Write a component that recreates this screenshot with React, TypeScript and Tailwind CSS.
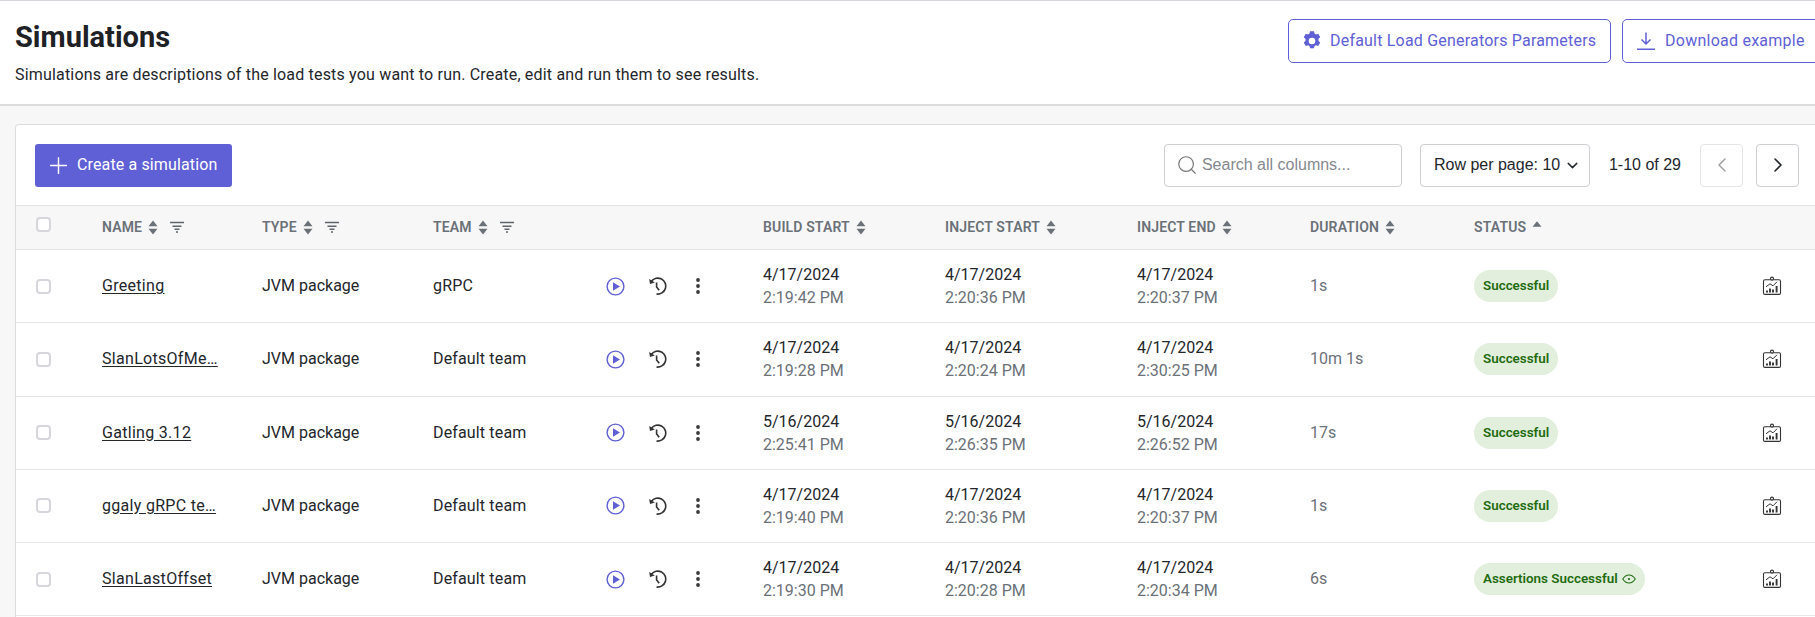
import { Plus, Search, ChevronDown, ChevronLeft, ChevronRight } from "lucide-react";

type Row = {
  name: string;
  team: string;
  build: [string, string];
  start: [string, string];
  end: [string, string];
  duration: string;
  status: string;
  assertions?: boolean;
};

const rows: Row[] = [
  { name: "Greeting", team: "gRPC", build: ["4/17/2024", "2:19:42 PM"], start: ["4/17/2024", "2:20:36 PM"], end: ["4/17/2024", "2:20:37 PM"], duration: "1s", status: "Successful" },
  { name: "SlanLotsOfMe…", team: "Default team", build: ["4/17/2024", "2:19:28 PM"], start: ["4/17/2024", "2:20:24 PM"], end: ["4/17/2024", "2:30:25 PM"], duration: "10m 1s", status: "Successful" },
  { name: "Gatling 3.12", team: "Default team", build: ["5/16/2024", "2:25:41 PM"], start: ["5/16/2024", "2:26:35 PM"], end: ["5/16/2024", "2:26:52 PM"], duration: "17s", status: "Successful" },
  { name: "ggaly gRPC te…", team: "Default team", build: ["4/17/2024", "2:19:40 PM"], start: ["4/17/2024", "2:20:36 PM"], end: ["4/17/2024", "2:20:37 PM"], duration: "1s", status: "Successful" },
  { name: "SlanLastOffset", team: "Default team", build: ["4/17/2024", "2:19:30 PM"], start: ["4/17/2024", "2:20:28 PM"], end: ["4/17/2024", "2:20:34 PM"], duration: "6s", status: "Assertions Successful", assertions: true },
];

function SortIcon() {
  return (
    <svg width="10" height="15" viewBox="0 0 10 15" className="fill-[#6b7178]">
      <path d="M5 .5 9.5 6.3H.5Z" />
      <path d="M5 14.5 .5 8.7H9.5Z" />
    </svg>
  );
}

function FilterIcon() {
  return (
    <svg width="14" height="12" viewBox="0 0 14 12" className="stroke-[#5f656c]" strokeWidth="1.4" fill="none">
      <path d="M0 1.5H14M2.5 5.2H11.5M4.5 8.2H9.5M6 11H8" />
    </svg>
  );
}

function GearIcon() {
  return (
    <svg width="22" height="22" viewBox="0 0 20 20" className="fill-[#6060d6]">
      <path
        fillRule="evenodd"
        d="M8.2 1.2h3.6l.5 2.1 1.3.75 2.1-.65 1.8 3.1-1.6 1.5v1.9l1.6 1.5-1.8 3.1-2.1-.65-1.3.75-.5 2.1H8.2l-.5-2.1-1.3-.75-2.1.65-1.8-3.1 1.6-1.5V8.1L2.5 6.6l1.8-3.1 2.1.65 1.3-.75ZM10 7a3 3 0 1 0 0 6 3 3 0 0 0 0-6Z"
      />
    </svg>
  );
}

function DownloadIcon() {
  return (
    <svg width="20" height="20" viewBox="0 0 20 20" fill="none" className="stroke-[#6060d6]" strokeWidth="1.5">
      <path d="M10 1.5V13M5.5 8.5 10 13l4.5-4.5M1 18.2h18" />
    </svg>
  );
}

function PlayIcon() {
  return (
    <svg width="19" height="19" viewBox="0 0 19 19" fill="none">
      <circle cx="9.5" cy="9.5" r="8.4" stroke="#6060d6" strokeWidth="1.4" />
      <path d="M7 5.2 14 9.5 7 13.8Z" fill="#6060d6" />
    </svg>
  );
}

function HistoryIcon() {
  return (
    <svg width="20" height="20" viewBox="0 0 20 20" fill="none" stroke="#333" strokeWidth="1.6">
      <path d="M4.4 5.2A8 8 0 1 1 9.5 18" />
      <path d="M2.2 3 3 8l4.8-1.4" fill="#333" stroke="none" />
      <path d="M9.6 6.5v4.4l2.6 3.4" />
    </svg>
  );
}

function DotsIcon() {
  return (
    <svg width="6" height="18" viewBox="0 0 6 18" className="fill-[#3a3a3a]">
      <circle cx="3" cy="3" r="1.9" />
      <circle cx="3" cy="9" r="1.9" />
      <circle cx="3" cy="15" r="1.9" />
    </svg>
  );
}

function ReportIcon() {
  return (
    <svg width="20" height="20" viewBox="0 0 20 20" fill="none" stroke="#333" strokeWidth="1.1">
      <rect x="1.5" y="3.8" width="17" height="14.6" rx="1.4" />
      <circle cx="10" cy="2.6" r="1.5" fill="#fff" />
      <path d="M4 10.8 8 7.8l3 2 4-4" strokeWidth="1" />
      <path d="M5 16.6v-2M8 16.6v-4.2M11 16.6v-3M14.6 16.6V10" strokeWidth="1.9" />
    </svg>
  );
}

function EyeIcon() {
  return (
    <svg width="14" height="10" viewBox="0 0 14 10" fill="none" stroke="#1f6b0f" strokeWidth="1.1" className="ml-1">
      <path d="M.8 5C2.4 2.4 4.5 1 7 1s4.6 1.4 6.2 4C11.6 7.6 9.5 9 7 9S2.4 7.6.8 5Z" />
      <circle cx="7" cy="5" r="1.1" fill="#1f6b0f" stroke="none" />
    </svg>
  );
}

function Checkbox() {
  return <span className="block h-[15px] w-[15px] rounded-[4px] border-2 border-[#d6d6dc] bg-white" />;
}

function DateCell({ value }: { value: [string, string] }) {
  return (
    <div className="leading-[23px]">
      <div className="text-[#23262b]">{value[0]}</div>
      <div className="text-[#6c7178]">{value[1]}</div>
    </div>
  );
}

function HeaderLabel({ label, filter, asc }: { label: string; filter?: boolean; asc?: boolean }) {
  return (
    <div className="-mt-px flex items-center text-[14px] font-semibold tracking-[0.15px] text-[#6b7178] uppercase">
      <span>{label}</span>
      {asc ? (
        <svg width="10" height="6" viewBox="0 0 10 6" className="mb-[6px] ml-[6px] fill-[#6b7178]">
          <path d="M5 .3 9.5 5.7H.5Z" />
        </svg>
      ) : (
        <span className="ml-[6px] flex">
          <SortIcon />
        </span>
      )}
      {filter && (
        <span className="ml-[12px] flex">
          <FilterIcon />
        </span>
      )}
    </div>
  );
}

export default function App() {
  return (
    <div className="h-screen w-full overflow-hidden bg-[#f7f7f7] font-['Roboto',sans-serif] text-[16px] text-[#23262b]">
      <div className="w-[1835px]">
        <div className="flex h-[106px] items-start justify-between border-t border-b-2 border-t-[#d5d5dc] border-b-[#dcdcdc] bg-white px-[15px]">
          <div>
            <h1 className="mt-[20px] text-[29px] leading-[32px] font-bold text-[#1e2125]">Simulations</h1>
            <p className="mt-[12px] text-[16px] leading-[20px] tracking-[0.18px] text-[#23262b]">
              Simulations are descriptions of the load tests you want to run. Create, edit and run them to see results.
            </p>
          </div>
          <div className="mt-[18px] flex gap-[11px]">
            <button className="flex h-[44px] w-[323px] items-center gap-[7px] rounded-[5px] border border-[#6060d6] bg-white pl-[12px] tracking-[0.2px] text-[#6060d6]">
              <GearIcon />
              Default Load Generators Parameters
            </button>
            <button className="flex h-[44px] w-[198px] items-center gap-[9px] rounded-[5px] border border-[#6060d6] bg-white pl-[13px] tracking-[0.25px] text-[#6060d6]">
              <DownloadIcon />
              Download example
            </button>
          </div>
        </div>

        <div className="px-[15px] pt-[18px]">
          <div className="min-h-[600px] rounded-t-[4px] border border-b-0 border-[#dcdcdc] bg-white">
            <div className="flex h-[80px] items-center pr-[20px] pl-[19px]">
              <button className="flex h-[43px] w-[197px] items-center gap-[5px] rounded-[3px] bg-[#6060d6] pl-[10px] text-[16px] tracking-[0.13px] text-white">
                <Plus size={27} strokeWidth={1.3} />
                Create a simulation
              </button>
              <div className="ml-auto flex h-[43px] w-[238px] items-center gap-[4px] rounded-[4px] border border-[#cfcfd4] px-[11px] font-['Liberation_Sans',sans-serif] text-[#85898f]">
                <Search size={22} strokeWidth={1.3} className="text-[#777]" />
                Search all columns...
              </div>
              <div className="ml-[18px] flex h-[43px] w-[170px] items-center justify-between rounded-[4px] border border-[#cfcfd4] pr-[8px] pl-[13px] font-['Liberation_Sans',sans-serif] text-[#23262b]">
                Row per page: 10
                <ChevronDown size={17} strokeWidth={2} />
              </div>
              <span className="ml-[19px] font-['Liberation_Sans',sans-serif] text-[#23262b]">1-10 of 29</span>
              <div className="ml-[19px] flex h-[43px] w-[43px] items-center justify-center rounded-[4px] border border-[#e5e5e8] text-[#9a9a9a]">
                <ChevronLeft size={24} strokeWidth={1.4} />
              </div>
              <div className="ml-[13px] flex h-[43px] w-[43px] items-center justify-center rounded-[4px] border border-[#cfcfd4] text-[#23262b]">
                <ChevronRight size={24} strokeWidth={1.6} />
              </div>
            </div>

            <div className="grid h-[45px] grid-cols-[66px_160px_171px_330px_182px_192px_173px_164px_288px_1fr] items-center border-y border-[#e3e3e3] bg-[#f7f7f7] pl-[20px]">
              <div className="-mt-[7px]">
                <Checkbox />
              </div>
              <HeaderLabel label="Name" filter />
              <HeaderLabel label="Type" filter />
              <HeaderLabel label="Team" filter />
              <HeaderLabel label="Build start" />
              <HeaderLabel label="Inject start" />
              <HeaderLabel label="Inject end" />
              <HeaderLabel label="Duration" />
              <HeaderLabel label="Status" asc />
              <div />
            </div>

            {rows.map((row) => (
              <div
                key={row.name}
                className="grid h-[73.25px] grid-cols-[66px_160px_171px_330px_182px_192px_173px_164px_288px_1fr] items-center border-b border-[#e6e6e6] pl-[20px]"
              >
                <Checkbox />
                <a className="tracking-[0.3px] underline underline-offset-2">{row.name}</a>
                <div>JVM package</div>
                <div className="relative flex items-center tracking-[0.15px]">
                  <span>{row.team}</span>
                  <div className="absolute top-1/2 left-[173px] flex -translate-y-1/2 items-center">
                    <PlayIcon />
                    <span className="ml-[22px] flex">
                      <HistoryIcon />
                    </span>
                    <span className="ml-[28px] flex">
                      <DotsIcon />
                    </span>
                  </div>
                </div>
                <DateCell value={row.build} />
                <DateCell value={row.start} />
                <DateCell value={row.end} />
                <div className="text-[#6c7178]">{row.duration}</div>
                <div>
                  <span className="inline-flex h-[32px] items-center rounded-full bg-[#e1efdc] px-[9px] text-[13.4px] font-semibold text-[#1f6b0f]">
                    {row.status}
                    {row.assertions && <EyeIcon />}
                  </span>
                </div>
                <div className="flex">
                  <ReportIcon />
                </div>
              </div>
            ))}
          </div>
        </div>
      </div>
    </div>
  );
}
